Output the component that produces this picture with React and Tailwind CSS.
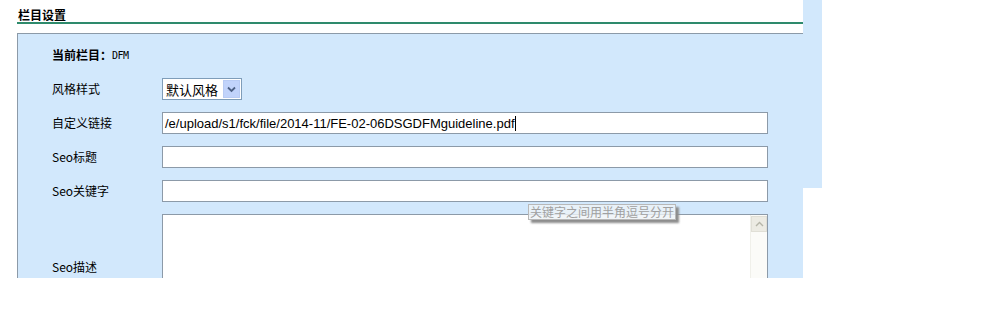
const labelFont = { fontFamily: 'SimSun, "Noto Sans CJK SC", sans-serif' };

function Row({ label, children }) {
  return (
    <div className="flex items-center h-[34px]">
      <div className="w-[110px] text-[12px] text-black">{label}</div>
      {children}
    </div>
  );
}

export default function App() {
  return (
    <div
      className="flex w-[996px] h-[324px] bg-white overflow-hidden"
      style={labelFont}
    >
      <div className="w-[803px] shrink-0">
        {/* Title */}
        <div className="pt-[7px] h-[33px]">
          <div className="pl-[18px] text-[12px] font-bold leading-[15px] text-black">栏目设置</div>
          <div className="ml-[17px] h-[2px] bg-[#2e8a6c]"></div>
        </div>

        {/* Panel */}
        <div className="relative ml-[17px] h-[245px] border-t border-l border-[#8c9aa8] bg-[#d2e8fc] pl-[34px] pt-[4px] overflow-hidden">
          <div className="flex items-center h-[34px] text-[12px] font-bold text-black">
            当前栏目：<span className="font-normal text-[10px] font-['DejaVu_Sans_Mono'] tracking-[-0.5px]">DFM</span>
          </div>

          <Row label="风格样式">
            <div className="flex items-center h-[22px] w-[80px] border border-[#7f9db9] bg-white">
              <span className="pl-[3px] text-[13px] leading-none text-black">默认风格</span>
              <div className="ml-auto mr-[1px] flex items-center justify-center w-[17px] h-[18px] bg-[#c1d3fb] border border-[#b8cbf4]">
                <svg width="9" height="7" viewBox="0 0 9 7">
                  <path d="M1 1.5 L4.5 5 L8 1.5" stroke="#4d6185" strokeWidth="1.8" fill="none" />
                </svg>
              </div>
            </div>
          </Row>

          <Row label="自定义链接">
            <div className="flex items-center h-[22px] w-[606px] border border-[#8c9aa8] bg-white">
              <span className="pl-[2px] text-[13px] leading-none text-black font-['Liberation_Sans']">
                /e/upload/s1/fck/file/2014-11/FE-02-06DSGDFMguideline.pdf
              </span>
              <span className="w-[1px] h-[15px] bg-black"></span>
            </div>
          </Row>

          <Row label="Seo标题">
            <div className="h-[22px] w-[606px] border border-[#8c9aa8] bg-white"></div>
          </Row>

          <Row label="Seo关键字">
            <div className="h-[22px] w-[606px] border border-[#8c9aa8] bg-white"></div>
          </Row>

          <div className="flex items-center h-[106px] mt-[6px]">
            <div className="w-[110px] text-[12px] text-black">Seo描述</div>
            <div className="self-start flex h-[106px] w-[606px] border-t border-l border-r border-[#8c9aa8] bg-white">
              <div className="ml-auto w-[17px] bg-[#fbfbf8] border-l border-[#f0f0ea] pt-[1px]">
                <div className="flex items-center justify-center w-[16px] h-[16px] bg-[#ecebe3] border border-[#e0dfd6]">
                  <svg width="9" height="6" viewBox="0 0 9 6">
                    <path d="M1 5 L4.5 1.5 L8 5" stroke="#b5b5a8" strokeWidth="1.4" fill="none" />
                  </svg>
                </div>
              </div>
            </div>
          </div>

          {/* tooltip */}
          <div className="absolute left-[510px] top-[170px] h-[16px] px-[1px] border border-[#b8b8b8] bg-[#eef2f6]/80 text-[12px] leading-[14px] text-[#a0a0a0] shadow-[3px_3px_2px_#8d8d8d]">
            关键字之间用半角逗号分开
          </div>
        </div>
      </div>

      <div className="w-[19px] h-[188px] bg-[#d2e8fc] shrink-0"></div>
    </div>
  );
}
